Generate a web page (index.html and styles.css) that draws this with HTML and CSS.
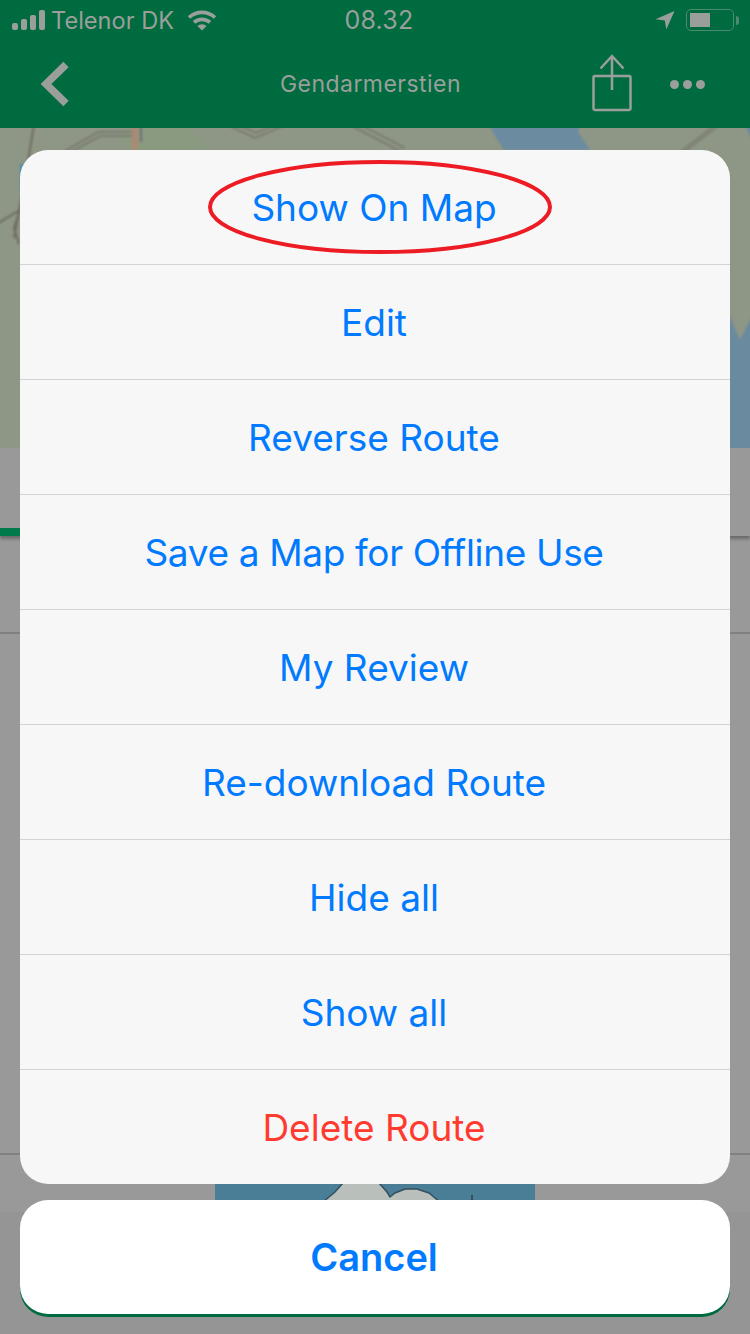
FILE: index.html
```html
<!DOCTYPE html>
<html lang="en">
<head>
  <meta charset="UTF-8" />
  <meta name="viewport" content="width=device-width, initial-scale=1" />
  <title>Gendarmerstien</title>
  <link rel="stylesheet" href="styles.css">
</head>
<body>
  <div class="phone">
    <header class="top">
      <div class="status">
        <div class="status-left">
          <svg class="signal" width="34" height="22" viewBox="0 0 34 22">
            <rect x="0" y="14" width="6" height="7" rx="2"/>
            <rect x="9" y="10" width="6" height="11" rx="2"/>
            <rect x="18" y="6" width="6" height="15" rx="2"/>
            <rect x="27" y="1" width="6" height="20" rx="2"/>
          </svg>
          <span>Telenor DK</span>
          <svg class="wifi" width="30" height="22" viewBox="0 0 30 22">
            <path d="M2 8.500a19 19 0 0 1 26 0" fill="none" stroke-width="3.600"/>
            <path d="M7 13.400a12 12 0 0 1 16 0" fill="none" stroke-width="3.600"/>
            <path d="M10.400 17a6.600 6.600 0 0 1 9.200 0L15 21.500z" class="fill"/>
          </svg>
        </div>
        <span class="clock">08.32</span>
        <div class="status-right">
          <svg width="20" height="20" viewBox="0 0 20 20"><path class="fill" d="M19.500 1 11.300 19.500 9.800 10.500 0.500 9.200z"/></svg>
          <div class="battery"><div class="battery-level"></div></div>
          <div class="battery-tip"></div>
        </div>
      </div>
      <nav class="nav">
        <svg class="back" width="30" height="46" viewBox="0 0 30 46"><path d="M26 3.500 6 23l20 19.500" fill="none" stroke-width="7.500"/></svg>
        <h1>Gendarmerstien</h1>
        <svg class="share" width="40" height="58" viewBox="0 0 40 58">
          <path d="M12 22H3a1.500 1.500 0 0 0-1.500 1.500v31A1.500 1.500 0 0 0 3 56h34a1.500 1.500 0 0 0 1.500-1.500v-31A1.500 1.500 0 0 0 37 22h-9" fill="none" stroke-width="2.500"/>
          <path d="M20 2v34M8.500 14.500 20 2l11.500 12.500M12 22h16" fill="none" stroke-width="2.500"/>
        </svg>
        <div class="dots"><i></i><i></i><i></i></div>
      </nav>
    </header>

    <div class="map-wrap">
      <svg class="map" width="770" height="340" viewBox="-10 -10 770 340">
        <rect x="-10" y="-10" width="770" height="340" fill="#8e9686"/>
        <path d="M120 5l60-10 30 25-80 10z" fill="#8a9a80"/>
        <path d="M486-10h96l-4 14 12 18h-86l-10-16z" fill="#6b8ba0"/>
        <path d="M720 166 740 212 760 172V330H700V184z" fill="#6a8aa0"/>
        <path d="M742-10h18v40z" fill="#6a8aa0"/>
        <path d="M20 36h3v26h-3z" fill="#4a8fb0"/>
        <path d="M35-10 27 40 14 110M-10 100 20 82 14 100 19 116" stroke="#6d6c63" stroke-width="2" fill="none"/>
        <path d="M65 23 98 4h36M67 26 100 8h34M230-2l25 12 28-12M232-6l24 11 26-11M352-2l50 26M355-6l50 26M680 24 714-2M684 24 718-2" stroke="#76766a" stroke-width="1.500" fill="none"/>
        <path d="M135-10v32" stroke="#a98a74" stroke-width="7" fill="none"/>
        <path d="M141-10v24" stroke="#66727a" stroke-width="2" fill="none"/>
      </svg>
    </div>

    <div class="tabs"><div class="tab-active"></div></div>
    <div class="summary"></div>
    <div class="details"></div>
    <div class="photo-row">
      <div class="photo">
        <svg width="320" height="57" viewBox="0 0 320 57">
          <path d="M108 47 120 37l8-9h36l8 9 3 5 5-4 10-4h12l12 4 12 10v10H108z" fill="#b9bfbb" stroke="#34505e" stroke-width="1.500"/>
          <path d="M257 40v17" stroke="#34505e" stroke-width="2"/>
        </svg>
      </div>
    </div>
    <div class="footer"><div class="footer-button"></div></div>

    <div class="overlay">
      <div class="sheet">
        <svg class="circle" width="350" height="100" viewBox="0 0 350 100"><ellipse cx="172" cy="47" rx="170" ry="45" fill="none"/></svg>
        <div class="sheet-row">Show On Map</div>
        <div class="sheet-row">Edit</div>
        <div class="sheet-row">Reverse Route</div>
        <div class="sheet-row tight">Save a Map for Offline Use</div>
        <div class="sheet-row">My Review</div>
        <div class="sheet-row">Re-download Route</div>
        <div class="sheet-row">Hide all</div>
        <div class="sheet-row">Show all</div>
        <div class="sheet-row danger">Delete Route</div>
      </div>
      <div class="cancel">Cancel</div>
    </div>
  </div>
</body>
</html>
```

FILE: styles.css
```css
:root {
  --green: #006b3f;
  --dim-text: #9a9f9c;
  --blue: #007aff;
  --red: #ff3b30;
  --sheet: #f7f7f7;
  --dim-bg: #999999;
}

* {
  box-sizing: border-box;
  margin: 0;
  padding: 0;
}

body {
  font-family: 'Inter', 'Liberation Sans', sans-serif;
  background: var(--dim-bg);
}

.phone {
  position: relative;
  width: 750px;
  height: 1334px;
  overflow: hidden;
  display: flex;
  flex-direction: column;
}

/* Status bar and nav */
.top {
  height: 128px;
  background: var(--green);
  color: var(--dim-text);
  flex-shrink: 0;
  position: relative;
  z-index: 1;
}

.top svg {
  display: block;
  fill: var(--dim-text);
  stroke: var(--dim-text);
}

.top svg .fill {
  stroke: none;
}

.status {
  height: 40px;
  padding: 0 12px;
  display: grid;
  grid-template-columns: 1fr auto 1fr;
  align-items: center;
  font-size: 23.6px;
}

.status-left {
  display: flex;
  align-items: center;
  gap: 5px;
}

.status-left .signal {
  stroke: none;
}

.status-left .wifi {
  margin-left: 8px;
}

.clock {
  margin-left: 8px;
  font-size: 25px;
  letter-spacing: 0.2px;
}

.status-right {
  display: flex;
  align-items: center;
  justify-content: flex-end;
}

.battery {
  width: 48px;
  height: 22px;
  margin-left: 11px;
  padding: 3px;
  border: 1.5px solid #4d8a70;
  border-radius: 5px;
}

.battery-level {
  width: 20px;
  height: 100%;
  background: var(--dim-text);
}

.battery-tip {
  width: 3px;
  height: 9px;
  margin: 0 -1px 0 2px;
  background: #4d8a70;
  border-radius: 0 3px 3px 0;
}

.nav {
  height: 88px;
  display: flex;
  align-items: center;
  padding: 0 44px 0 40px;
}

.nav h1 {
  font-size: 23px;
  font-weight: 400;
  margin-left: 210px;
  letter-spacing: 0.45px;
  width: 312px;
}

.share {
  margin-top: -2px;
}

.dots {
  display: flex;
  gap: 4px;
  margin-left: 38px;
}

.dots i {
  width: 9px;
  height: 9px;
  border-radius: 50%;
  background: var(--dim-text);
}

/* Dimmed page behind the sheet */
.map-wrap {
  height: 320px;
  flex-shrink: 0;
  overflow: hidden;
}

.map {
  display: block;
  margin: -10px;
  filter: blur(1px);
}

.tabs {
  height: 88px;
  flex-shrink: 0;
  display: flex;
  align-items: flex-end;
  box-shadow: 0 3px 3px rgba(0, 0, 0, 0.3);
}

.tab-active {
  width: 24px;
  height: 8px;
  background: #007a4a;
}

.summary {
  height: 98px;
  flex-shrink: 0;
  border-bottom: 2px solid #808080;
}

.details {
  height: 521px;
  flex-shrink: 0;
  border-bottom: 2px solid #808080;
}

.photo-row {
  height: 57px;
  flex-shrink: 0;
  display: flex;
  justify-content: center;
}

.photo {
  width: 320px;
  height: 57px;
  background: #4a7d96;
}

.photo svg {
  display: block;
  filter: blur(0.5px);
}

.footer {
  flex: 1;
  padding: 0 20px;
  background: #959595;
}

.footer-button {
  height: 105px;
  background: var(--green);
  border-radius: 28px;
}

/* Action sheet */
.overlay {
  position: absolute;
  inset: 150px 20px auto;
  z-index: 2;
}

.sheet {
  position: relative;
  background: var(--sheet);
  border-radius: 28px;
  overflow: hidden;
}

.sheet-row {
  height: 115px;
  padding-right: 2px;
  display: flex;
  align-items: center;
  justify-content: center;
  font-size: 37px;
  color: var(--blue);
  border-bottom: 1px solid #d3d3d6;
}

.sheet-row:last-child {
  height: 114px;
  border-bottom: none;
}

.tight {
  letter-spacing: -0.35px;
}

.danger {
  color: var(--red);
}

.circle {
  position: absolute;
  top: 10px;
  left: 188px;
}

.circle ellipse {
  stroke: #ed1c24;
  stroke-width: 4;
}

.cancel {
  height: 114px;
  margin-top: 16px;
  padding-right: 2px;
  display: flex;
  align-items: center;
  justify-content: center;
  background: #ffffff;
  border-radius: 28px;
  font-size: 38px;
  font-weight: 600;
  color: var(--blue);
}
```
